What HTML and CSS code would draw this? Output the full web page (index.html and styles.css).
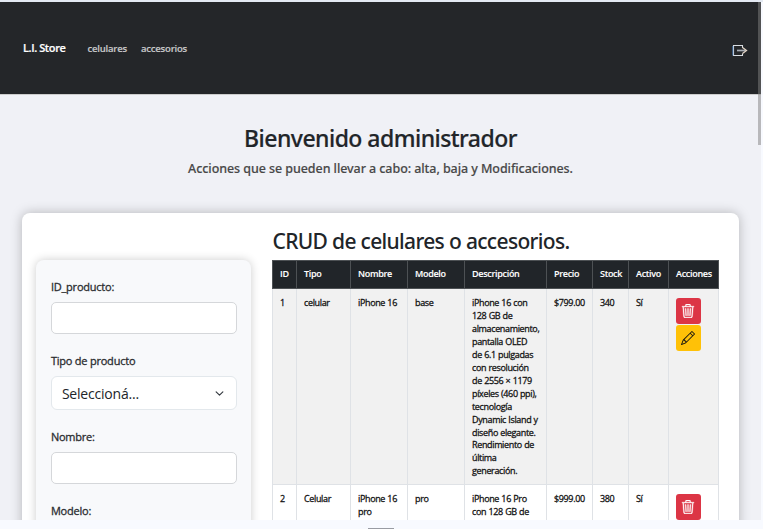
FILE: index.html
```html
<!DOCTYPE html>
<html lang="es">
<head>
<meta charset="utf-8">
<title>L.I. Store</title>
<link rel="stylesheet" href="styles.css">
</head>
<body>
<div class="viewport">
  <nav class="navbar">
    <a class="brand">L.I. Store</a>
    <a class="link link-phones">celulares</a>
    <a class="link link-acc">accesorios</a>
    <svg class="logout" viewBox="0 0 16 14" fill="none"><path d="M10.5 4V1.5h-9v10h9V9.5" stroke="#d9dde2" stroke-width="1.1"/><path d="M.8 2v9.5" stroke="#4a80c0" stroke-width=".8"/><path d="M5 6.5h8.7" stroke="#a7adb5" stroke-width="1.7"/><path d="M10.5 3.5l4 3-4 3" stroke="#e0d2c4" stroke-width="1.3"/></svg>
  </nav>
  <header class="intro">
    <h1><span>Bienvenido administrador</span></h1>
    <p><span>Acciones que se pueden llevar a cabo: alta, baja y Modificaciones.</span></p>
  </header>
  <main class="card">
    <form class="form">
      <label>ID_producto:</label>
      <div class="input"></div>
      <label class="label-type">Tipo de producto</label>
      <div class="select"><span>Seleccioná...</span><svg viewBox="0 0 16 16" fill="none" stroke="#343a40" stroke-width="2" stroke-linecap="round" stroke-linejoin="round"><path d="m2 5 6 6 6-6"/></svg></div>
      <label>Nombre:</label>
      <div class="input"></div>
      <label>Modelo:</label>
    </form>
    <section class="listing">
      <h2><span>CRUD de celulares o accesorios.</span></h2>
      <table>
        <colgroup><col class="c-id"><col class="c-type"><col class="c-name"><col class="c-model"><col class="c-desc"><col class="c-price"><col class="c-stock"><col class="c-active"><col class="c-actions"></colgroup>
        <thead><tr><th>ID</th><th>Tipo</th><th>Nombre</th><th>Modelo</th><th>Descripción</th><th>Precio</th><th>Stock</th><th>Activo</th><th>Acciones</th></tr></thead>
        <tbody>
          <tr class="odd"><td>1</td><td>celular</td><td>iPhone 16</td><td>base</td>
            <td>iPhone 16 con<br>128 GB de<br>almacenamiento,<br>pantalla OLED<br>de 6.1 pulgadas<br>con resolución<br>de 2556 × 1179<br>píxeles (460 ppi),<br>tecnología<br>Dynamic Island y<br>diseño elegante.<br>Rendimiento de<br>última<br>generación.</td>
            <td>$799.00</td><td>340</td><td>Sí</td>
            <td class="actions"><div class="btn danger"><svg viewBox="0 0 16 16"><path d="M6.5 1h3a.5.5 0 0 1 .5.5v1H6v-1a.5.5 0 0 1 .5-.5M11 2.5v-1A1.5 1.5 0 0 0 9.5 0h-3A1.5 1.5 0 0 0 5 1.5v1H1.5a.5.5 0 0 0 0 1h.54l.85 10.66A2 2 0 0 0 4.88 16h6.23a2 2 0 0 0 2-1.84l.85-10.66h.54a.5.5 0 0 0 0-1zm1.96 1-.85 10.58a1 1 0 0 1-1 .92H4.89a1 1 0 0 1-1-.92L3.04 3.5zM4.8 5.03l.5 8.5h1l-.5-8.5zm5.4 0-.5 8.5h1l.5-8.5zM7.5 5v8.5h1V5z"/></svg></div>
            <div class="btn warning"><svg viewBox="0 0 16 16"><path d="M12.15.15a.5.5 0 0 1 .7 0l3 3a.5.5 0 0 1 0 .7l-10 10a.5.5 0 0 1-.17.11l-5 2a.5.5 0 0 1-.65-.65l2-5a.5.5 0 0 1 .11-.17zM11.2 2.5l2.3 2.3 1.3-1.3-2.3-2.3zm1.6 3L10.5 3.2 4 9.7V10h.5a.5.5 0 0 1 .5.5v.5h.5a.5.5 0 0 1 .5.5v.5h.3zM3.03 10.68l-.1.1-1.53 3.82 3.82-1.53.1-.1A.5.5 0 0 1 5 12.5V12h-.5a.5.5 0 0 1-.5-.5V11h-.5a.5.5 0 0 1-.47-.32"/></svg></div></td></tr>
          <tr><td>2</td><td>Celular</td><td>iPhone 16<br>pro</td><td>pro</td><td>iPhone 16 Pro<br>con 128 GB de</td><td>$999.00</td><td>380</td><td>Sí</td>
            <td class="actions"><div class="btn danger"><svg viewBox="0 0 16 16"><path d="M6.5 1h3a.5.5 0 0 1 .5.5v1H6v-1a.5.5 0 0 1 .5-.5M11 2.5v-1A1.5 1.5 0 0 0 9.5 0h-3A1.5 1.5 0 0 0 5 1.5v1H1.5a.5.5 0 0 0 0 1h.54l.85 10.66A2 2 0 0 0 4.88 16h6.23a2 2 0 0 0 2-1.84l.85-10.66h.54a.5.5 0 0 0 0-1zm1.96 1-.85 10.58a1 1 0 0 1-1 .92H4.89a1 1 0 0 1-1-.92L3.04 3.5zM4.8 5.03l.5 8.5h1l-.5-8.5zm5.4 0-.5 8.5h1l.5-8.5zM7.5 5v8.5h1V5z"/></svg></div></td></tr>
        </tbody>
      </table>
    </section>
  </main>
  <div class="scrollbar"></div>
</div>
<div class="handle"></div>
</body>
</html>
```
FILE: styles.css
```css
* { box-sizing: border-box; }
body {
  margin: 0; width: 763px; height: 529px; overflow: hidden;
  display: flex; flex-direction: column;
  background: #f8faff; border-top: 2px solid #e3e9f2;
  font-family: "Open Sans", "Noto Sans", sans-serif; color: #212529;
}
.viewport { position: relative; width: 761px; height: 518px; flex: none; overflow: hidden; background: #f0f1f6; }
.navbar { height: 93px; display: flex; align-items: center; padding: 0 13px 0 23px; background: #242629; border-bottom: 1px solid #ccc; }
.brand { width: 64.5px; margin-top: -1px; font-size: 11px; font-weight: 600; letter-spacing: -.4px; color: #fff; -webkit-text-stroke: .2px; white-space: nowrap; }
.link { font-size: 9.5px; font-weight: 600; letter-spacing: -.2px; color: #c8c9ca; -webkit-text-stroke: .15px; white-space: nowrap; }
.link-phones { width: 53.5px; }
.logout { width: 16px; height: 14px; margin: 6px 0 0 auto; }
.intro, h2 { font-family: "Noto Sans", "Open Sans", sans-serif; }
.intro { text-align: center; height: 118px; padding-top: 28px; }
h1 { margin: 0; font-size: 23px; font-weight: 500; line-height: 30px; letter-spacing: -.53px; -webkit-text-stroke: .2px; }
.intro p { margin: 6px 0 0; font-size: 12.5px; font-weight: 500; line-height: 20px; letter-spacing: -.07px; color: #484848; -webkit-text-stroke: .15px; }
.card { display: flex; width: 717px; height: 500px; margin-left: 22px; padding: 14px; border-radius: 8px; background: #fff; box-shadow: 0 0 12px rgba(0,0,0,.25); }
.form { flex: none; width: 215px; height: 450px; margin: 33px 0 0 .4px; padding: 18px 14.5px; border-radius: 8px; background: #f8f9fb; box-shadow: 0 0 10px rgba(0,0,0,.2); }
label { display: block; height: 24px; line-height: 18px; font-size: 11px; letter-spacing: -.22px; color: #2b2d30; -webkit-text-stroke: .3px; }
.input { height: 32px; margin-bottom: 18px; border: 1px solid #d5d7da; border-radius: 5px; background: #fff; }
.select { height: 34px; margin-bottom: 18px; padding: 0 12px 0 10px; display: flex; align-items: center; justify-content: space-between; border: 1px solid #e3e8ec; border-radius: 6px; background: #fff; font-size: 14px; letter-spacing: -.2px; }
.select svg { width: 9px; height: 9px; }
.listing { width: 446px; margin-left: 20.6px; }
h2 { margin: 0 0 0 .5px; height: 33px; line-height: 28px; font-size: 21px; font-weight: 500; letter-spacing: -.67px; white-space: nowrap; }
table { width: 446px; table-layout: fixed; border-collapse: collapse; font-size: 9px; line-height: 12.95px; color: #111; }
.c-id { width: 24px; } .c-type { width: 54px; } .c-name { width: 57px; } .c-model { width: 57px; } .c-desc { width: 82px; }
.c-price { width: 46px; } .c-stock { width: 36px; } .c-active { width: 40px; } .c-actions { width: 50px; }
th, td { padding: 8px 7px 6px; vertical-align: top; text-align: left; white-space: nowrap; border: 1px solid #dfe2e6; letter-spacing: -.35px; word-spacing: .3px; -webkit-text-stroke: .28px; }
th { height: 28px; padding: 7px; background: #212529; color: #fff; border-color: #4d5154; font-weight: 600; letter-spacing: -.3px; -webkit-text-stroke: .1px; }
thead tr { height: 28px; }
.odd { height: 196px; }
.odd td { background: #f1f1f1; }
td.actions { padding-top: 9px; }
.btn { width: 25px; height: 26px; margin-bottom: 1px; border-radius: 3px; display: flex; align-items: center; justify-content: center; }
.btn svg { width: 14px; height: 14px; }
.danger { background: #dc3545; fill: #fff; }
.danger svg { stroke: #fff; stroke-width: .4; }
.warning { background: #ffc107; fill: #111; }
.scrollbar { position: absolute; right: 0; top: 0; width: 3px; height: 143px; background: rgba(128,128,128,.5); }
.handle { width: 26px; height: 1px; margin: 8px 0 0 368px; background: #999ca3; }
```
